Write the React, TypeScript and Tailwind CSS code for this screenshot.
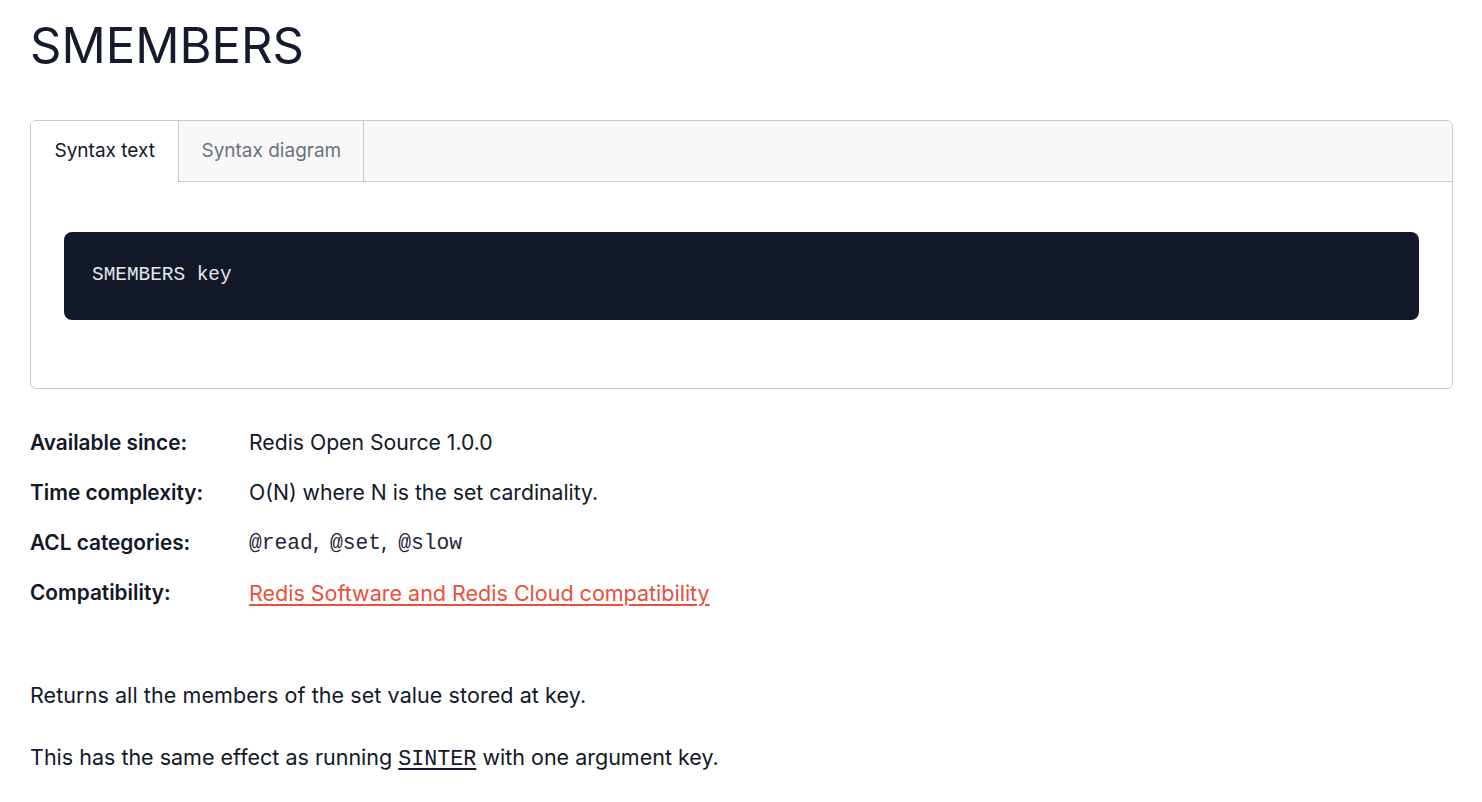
import React from "react";

export default function App() {
  const mono = "font-['Liberation_Mono',monospace]";
  return (
    <div className="min-h-screen bg-white pl-[30px] pr-[29px] text-[#111827] font-['Inter',sans-serif]">
      <h1 className="pt-[14px] text-[49px] leading-[64px] font-normal text-[#151a2c]">SMEMBERS</h1>

      <div className="mt-[42px] rounded-[6px] border border-[#c6cacf] overflow-hidden">
        <div className="flex h-[61px] bg-[#f8f8f8]">
          <div className="flex items-center border-r border-[#c6cacf] bg-white px-[23.5px] text-[19px] text-[#111827]">
            Syntax text
          </div>
          <div className="flex items-center border-r border-b border-[#c6cacf] px-[22px] text-[19px] text-[#6b7280]">
            Syntax diagram
          </div>
          <div className="flex-1 border-b border-[#c6cacf]" />
        </div>
        <div className="px-[33px] pt-[50px] pb-[68px]">
          <div className="flex h-[88px] items-center rounded-[8px] bg-[#131829] px-[28px]">
            <span className={`${mono} text-[19.4px] text-[#e5e7eb]`}>SMEMBERS key</span>
          </div>
        </div>
      </div>

      <div className="mt-[29px] flex flex-col text-[21.2px]">
        {[
          ["Available since:", <span>Redis Open Source 1.0.0</span>],
          ["Time complexity:", <span>O(N) where N is the set cardinality.</span>],
          [
            "ACL categories:",
            <span>
              <code className={`${mono} text-[21.3px] text-[#1f2937]`}>@read</code>,{" "}
              <code className={`${mono} ml-[5px] text-[21.3px] text-[#1f2937]`}>@set</code>,{" "}
              <code className={`${mono} ml-[5px] text-[21.3px] text-[#1f2937]`}>@slow</code>
            </span>,
          ],
          [
            "Compatibility:",
            <a href="#" className="text-[21.5px] text-[#e8503d] underline underline-offset-[3px] decoration-[2px]">
              Redis Software and Redis Cloud compatibility
            </a>,
          ],
        ].map(([label, value], i) => (
          <div key={i} className="flex h-[50px] items-center">
            <div className="w-[219px] shrink-0 text-[20.8px] font-semibold">{label as string}</div>
            <div>{value}</div>
          </div>
        ))}
      </div>

      <p className="mt-[61px] text-[21.5px] leading-[32px] tracking-[0.08px]">
        Returns all the members of the set value stored at <code className="font-['Inter',sans-serif]">key</code>.
      </p>
      <p className="mt-[30px] text-[21.5px] leading-[32px]">
        This has the same effect as running{" "}
        <a href="#" className={`${mono} text-[21.7px] underline underline-offset-[3px] decoration-[2px]`}>SINTER</a>{" "}
        with one argument <code className="font-['Inter',sans-serif]">key</code>.
      </p>
    </div>
  );
}
